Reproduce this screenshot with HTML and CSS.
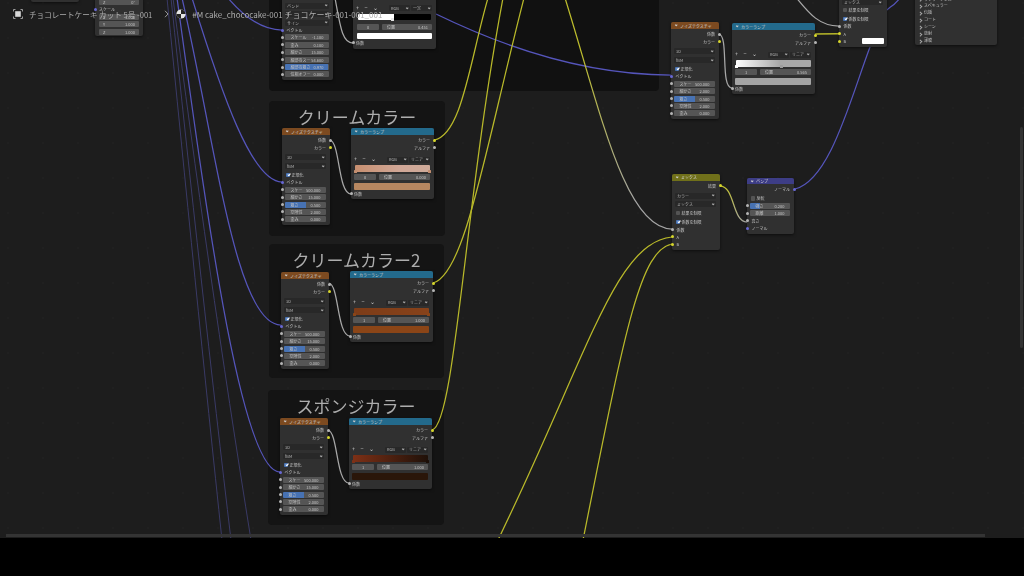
FILE: index.html
```html
<!DOCTYPE html>
<html lang="ja">
<head>
<meta charset="utf-8">
<title>チョコレートケーキ シェーダー</title>
<link rel="stylesheet" href="styles.css">
</head>
<body>
<main class="editor">
  <div class="canvas">
    <section class="frame f-top"></section>
    <section class="frame f-cream"><h2>クリームカラー</h2></section>
    <section class="frame f-cream2"><h2>クリームカラー2</h2></section>
    <section class="frame f-sponge"><h2>スポンジカラー</h2></section>

    <svg class="wires" width="1024" height="538" viewBox="0 0 1024 538">
      <defs>
        <linearGradient id="yg" gradientUnits="userSpaceOnUse" x1="565" y1="60" x2="640" y2="200">
          <stop offset="0" stop-color="#bdbd2c"/><stop offset="1" stop-color="#a5a5a5"/>
        </linearGradient>
        <linearGradient id="yg2" gradientUnits="userSpaceOnUse" x1="720" y1="186" x2="747" y2="222">
          <stop offset="0" stop-color="#c4c42a"/><stop offset="1" stop-color="#a5a5a5"/>
        </linearGradient>
      </defs>
      <path class="w dim" d="M167,-2 C185,180 205,380 222,540"/>
      <path class="w dim" d="M171,-2 C190,180 212,380 231,540"/>
      <path class="w dim" d="M173,-2 C195,170 222,360 251,540"/>
      <path class="w pur" d="M192,-2 C222,95 252,182 282,182"/>
      <path class="w pur" d="M182,-2 C215,140 235,325 281,325"/>
      <path class="w pur" d="M177,-2 C205,200 240,472 280,472"/>
      <path class="w pur" d="M228,-2 C245,18 262,30 282,30"/>
      <path class="w pur" d="M436,14 C510,50 590,75 671,75"/>
      <path class="w pur" d="M795,189 C830,180 850,100 870,47 S885,17 900,-2"/>
      <path class="w yel" d="M434,140 C462,135 470,60 488,-2"/>
      <path class="w yel" d="M433,283 C465,275 485,150 524,-2"/>
      <path class="w yel" d="M432,430 C455,425 465,200 503,-2"/>
      <path class="w yel" d="M672,237 C615,243 590,350 498,540"/>
      <path class="w yel" d="M672,244 C640,250 625,330 583,540"/>
      <path class="w yel thick" d="M814,34 L839,33.7"/>
      <path class="w" stroke="url(#yg)" d="M565,-2 C600,110 625,229 672,229"/>
      <path class="w" stroke="url(#yg2)" d="M720,186 C735,186 732,222 747,222"/>
      <path class="w gry" d="M330,140 C340,142 338,194 351,194"/>
      <path class="w gry" d="M329,283 C339,285 337,336 350,336"/>
      <path class="w gry" d="M328,430 C338,432 336,483 349,483"/>
      <path class="w gry" d="M719,34 C729,36 720,88 732,88"/>
      <path class="w gry" d="M335,-2 C340,25 342,43 353,43"/>
      <path class="w gry" d="M795,-4 C810,15 820,26 839,26"/>
    </svg>

    <!-- 左上のノード -->
    <section class="node n-far"></section>
    <section class="node n-map">
      <div class="row"><div class="field"><span>Z</span><span>0°</span></div></div>
      <div class="row"><i class="sock pur in"></i><span>スケール</span></div>
      <div class="row"><div class="field"><span>X</span><span>1.000</span></div></div>
      <div class="row"><div class="field"><span>Y</span><span>1.000</span></div></div>
      <div class="row"><div class="field"><span>Z</span><span>1.000</span></div></div>
    </section>

    <!-- 上のノイズ -->
    <section class="node n-topnoise">
      <div class="row"><div class="drop"><span>バンド</span></div></div>
      <div class="row sp1"><div class="drop"><span>X</span></div></div>
      <div class="row sp1"><div class="drop"><span>サイン</span></div></div>
      <div class="row"><i class="sock pur in"></i><span>ベクトル</span></div>
      <div class="row"><i class="sock in"></i><div class="field"><span>スケール</span><span>-1.100</span></div></div>
      <div class="row"><i class="sock in"></i><div class="field"><span>歪み</span><span>0.100</span></div></div>
      <div class="row"><i class="sock in"></i><div class="field"><span>細かさ</span><span>15.000</span></div></div>
      <div class="row"><i class="sock in"></i><div class="field"><span>細部のス…</span><span>54.600</span></div></div>
      <div class="row"><i class="sock in"></i><div class="field f97"><span>細部の粗さ</span><span>0.970</span></div></div>
      <div class="row"><i class="sock in"></i><div class="field"><span>位相オフ…</span><span>0.000</span></div></div>
    </section>
    <section class="node n-topramp">
      <div class="tools"><span>+</span><span>−</span><span>⌄</span><div class="drop mode"><span>RGB</span></div><div class="drop mode"><span>一定</span></div></div>
      <div class="bar b-step"><i class="stop mid"></i></div>
      <div class="pos"><div class="field idx"><span>0</span></div><div class="field"><span>位置</span><span>0.451</span></div></div>
      <div class="swatch s-white"></div>
      <div class="row"><i class="sock in"></i><span>係数</span></div>
    </section>

    <!-- クリームカラー -->
    <section class="node noise n-cn">
      <header class="head brown"><span>ノイズテクスチャ</span></header>
      <div class="row out first"><span>係数</span><i class="sock ou"></i></div>
      <div class="row out"><span>カラー</span><i class="sock yel ou"></i></div>
      <div class="row sp2"><div class="drop"><span>3D</span></div></div>
      <div class="row sp3"><div class="drop"><span>fBM</span></div></div>
      <div class="row sp3"><i class="chk on"></i><span>正規化</span></div>
      <div class="row"><i class="sock pur in"></i><span>ベクトル</span></div>
      <div class="row"><i class="sock in"></i><div class="field"><span>スケ…</span><span>500.000</span></div></div>
      <div class="row"><i class="sock in"></i><div class="field"><span>細かさ</span><span>15.000</span></div></div>
      <div class="row"><i class="sock in"></i><div class="field f50"><span>粗さ</span><span>0.500</span></div></div>
      <div class="row"><i class="sock in"></i><div class="field"><span>空隙性</span><span>2.000</span></div></div>
      <div class="row"><i class="sock in"></i><div class="field"><span>歪み</span><span>0.000</span></div></div>
    </section>
    <section class="node ramp n-cr">
      <header class="head blue"><span>カラーランプ</span></header>
      <div class="row out first"><span>カラー</span><i class="sock yel ou"></i></div>
      <div class="row out"><span>アルファ</span><i class="sock ou"></i></div>
      <div class="tools"><span>+</span><span>−</span><span>⌄</span><div class="drop mode"><span>RGB</span></div><div class="drop mode"><span>リニア</span></div></div>
      <div class="bar b-cream"><i class="stop st c1 start"></i><i class="stop st c1 end"></i></div>
      <div class="pos"><div class="field idx"><span>0</span></div><div class="field"><span>位置</span><span>0.000</span></div></div>
      <div class="swatch s-cream"></div>
      <div class="row"><i class="sock in"></i><span>係数</span></div>
    </section>

    <!-- クリームカラー2 -->
    <section class="node noise n-c2n">
      <header class="head brown"><span>ノイズテクスチャ</span></header>
      <div class="row out first"><span>係数</span><i class="sock ou"></i></div>
      <div class="row out"><span>カラー</span><i class="sock yel ou"></i></div>
      <div class="row sp2"><div class="drop"><span>3D</span></div></div>
      <div class="row sp3"><div class="drop"><span>fBM</span></div></div>
      <div class="row sp3"><i class="chk on"></i><span>正規化</span></div>
      <div class="row"><i class="sock pur in"></i><span>ベクトル</span></div>
      <div class="row"><i class="sock in"></i><div class="field"><span>スケ…</span><span>500.000</span></div></div>
      <div class="row"><i class="sock in"></i><div class="field"><span>細かさ</span><span>15.000</span></div></div>
      <div class="row"><i class="sock in"></i><div class="field f50"><span>粗さ</span><span>0.500</span></div></div>
      <div class="row"><i class="sock in"></i><div class="field"><span>空隙性</span><span>2.000</span></div></div>
      <div class="row"><i class="sock in"></i><div class="field"><span>歪み</span><span>0.000</span></div></div>
    </section>
    <section class="node ramp n-c2r">
      <header class="head blue"><span>カラーランプ</span></header>
      <div class="row out first"><span>カラー</span><i class="sock yel ou"></i></div>
      <div class="row out"><span>アルファ</span><i class="sock ou"></i></div>
      <div class="tools"><span>+</span><span>−</span><span>⌄</span><div class="drop mode"><span>RGB</span></div><div class="drop mode"><span>リニア</span></div></div>
      <div class="bar b-cream2"><i class="stop st c2 start"></i><i class="stop st c2 end"></i></div>
      <div class="pos"><div class="field idx"><span>1</span></div><div class="field"><span>位置</span><span>1.000</span></div></div>
      <div class="swatch s-cream2"></div>
      <div class="row"><i class="sock in"></i><span>係数</span></div>
    </section>

    <!-- スポンジカラー -->
    <section class="node noise n-sn">
      <header class="head brown"><span>ノイズテクスチャ</span></header>
      <div class="row out first"><span>係数</span><i class="sock ou"></i></div>
      <div class="row out"><span>カラー</span><i class="sock yel ou"></i></div>
      <div class="row sp2"><div class="drop"><span>3D</span></div></div>
      <div class="row sp3"><div class="drop"><span>fBM</span></div></div>
      <div class="row sp3"><i class="chk on"></i><span>正規化</span></div>
      <div class="row"><i class="sock pur in"></i><span>ベクトル</span></div>
      <div class="row"><i class="sock in"></i><div class="field"><span>スケ…</span><span>500.000</span></div></div>
      <div class="row"><i class="sock in"></i><div class="field"><span>細かさ</span><span>15.000</span></div></div>
      <div class="row"><i class="sock in"></i><div class="field f50"><span>粗さ</span><span>0.500</span></div></div>
      <div class="row"><i class="sock in"></i><div class="field"><span>空隙性</span><span>2.000</span></div></div>
      <div class="row"><i class="sock in"></i><div class="field"><span>歪み</span><span>0.000</span></div></div>
    </section>
    <section class="node ramp n-sr">
      <header class="head blue"><span>カラーランプ</span></header>
      <div class="row out first"><span>カラー</span><i class="sock yel ou"></i></div>
      <div class="row out"><span>アルファ</span><i class="sock ou"></i></div>
      <div class="tools"><span>+</span><span>−</span><span>⌄</span><div class="drop mode"><span>RGB</span></div><div class="drop mode"><span>リニア</span></div></div>
      <div class="bar b-sponge"><i class="stop st c3 start"></i><i class="stop st c4 end"></i></div>
      <div class="pos"><div class="field idx"><span>1</span></div><div class="field"><span>位置</span><span>1.000</span></div></div>
      <div class="swatch s-sponge"></div>
      <div class="row"><i class="sock in"></i><span>係数</span></div>
    </section>

    <!-- 右上 -->
    <section class="node noise n-rn">
      <header class="head brown"><span>ノイズテクスチャ</span></header>
      <div class="row out first"><span>係数</span><i class="sock ou"></i></div>
      <div class="row out"><span>カラー</span><i class="sock yel ou"></i></div>
      <div class="row sp2"><div class="drop"><span>3D</span></div></div>
      <div class="row sp3"><div class="drop"><span>fBM</span></div></div>
      <div class="row sp3"><i class="chk on"></i><span>正規化</span></div>
      <div class="row"><i class="sock pur in"></i><span>ベクトル</span></div>
      <div class="row"><i class="sock in"></i><div class="field"><span>スケ…</span><span>500.000</span></div></div>
      <div class="row"><i class="sock in"></i><div class="field"><span>細かさ</span><span>2.000</span></div></div>
      <div class="row"><i class="sock in"></i><div class="field f50"><span>粗さ</span><span>0.500</span></div></div>
      <div class="row"><i class="sock in"></i><div class="field"><span>空隙性</span><span>2.000</span></div></div>
      <div class="row"><i class="sock in"></i><div class="field"><span>歪み</span><span>0.000</span></div></div>
    </section>
    <section class="node ramp n-rr">
      <header class="head blue"><span>カラーランプ</span></header>
      <div class="row out first"><span>カラー</span><i class="sock yel ou"></i></div>
      <div class="row out"><span>アルファ</span><i class="sock ou"></i></div>
      <div class="tools"><span>+</span><span>−</span><span>⌄</span><div class="drop mode"><span>RGB</span></div><div class="drop mode"><span>リニア</span></div></div>
      <div class="bar b-grey"><i class="stop st white start"></i><i class="stop st grey at58"></i></div>
      <div class="pos"><div class="field idx"><span>1</span></div><div class="field"><span>位置</span><span>0.565</span></div></div>
      <div class="swatch s-grey"></div>
      <div class="row"><i class="sock in"></i><span>係数</span></div>
    </section>
    <section class="node n-topmix">
      <div class="row"><div class="drop"><span>ミックス</span></div></div>
      <div class="row tight"><i class="chk"></i><span>結果を制限</span></div>
      <div class="row sp3"><i class="chk on"></i><span>係数を制限</span></div>
      <div class="row"><i class="sock in"></i><span>係数</span></div>
      <div class="row"><i class="sock yel in"></i><span>A</span></div>
      <div class="row"><i class="sock yel in"></i><span>B</span><b class="minisw"></b></div>
    </section>
    <section class="node n-list">
      <div class="li">サブサーフェス</div>
      <div class="li">スペキュラー</div>
      <div class="li">伝播</div>
      <div class="li">コート</div>
      <div class="li">シーン</div>
      <div class="li">放射</div>
      <div class="li">薄膜</div>
    </section>

    <!-- ミックス / バンプ -->
    <section class="node n-mix">
      <header class="head olive"><span>ミックス</span></header>
      <div class="row out mx0"><span>結果</span><i class="sock yel ou"></i></div>
      <div class="row mx1"><div class="drop"><span>カラー</span></div></div>
      <div class="row mx2"><div class="drop"><span>ミックス</span></div></div>
      <div class="row mx3"><i class="chk"></i><span>結果を制限</span></div>
      <div class="row mx2"><i class="chk on"></i><span>係数を制限</span></div>
      <div class="row mx4"><i class="sock in"></i><span>係数</span></div>
      <div class="row"><i class="sock yel in"></i><span>A</span></div>
      <div class="row"><i class="sock yel in"></i><span>B</span></div>
    </section>
    <section class="node n-bump">
      <header class="head indigo"><span>バンプ</span></header>
      <div class="row out mx0"><span>ノーマル</span><i class="sock pur ou"></i></div>
      <div class="row mx5"><i class="chk"></i><span>反転</span></div>
      <div class="row"><i class="sock in"></i><div class="field f20"><span>強さ</span><span>0.200</span></div></div>
      <div class="row"><i class="sock in"></i><div class="field"><span>距離</span><span>1.000</span></div></div>
      <div class="row"><i class="sock in"></i><span>高さ</span></div>
      <div class="row"><i class="sock pur in"></i><span>ノーマル</span></div>
    </section>
  </div>

  <nav class="crumbs">
    <svg class="ico" width="10" height="10" viewBox="0 0 10 10">
      <path d="M.5 2.5V.5H2.5M7.5 .5H9.5V2.5M9.5 7.5V9.5H7.5M2.5 9.5H.5V7.5" fill="none" stroke="#bbb" stroke-width=".8"/>
      <rect x="2.2" y="2.2" width="5.6" height="5.6" fill="#d8d8d8"/>
    </svg>
    <span class="c-first">チョコレートケーキ カット 5号 -001</span>
    <svg class="sep" width="5" height="8" viewBox="0 0 5 8"><path d="M1 .8 4 4 1 7.2" fill="none" stroke="#9a9a9a" stroke-width="1"/></svg>
    <svg class="ball" width="10" height="10" viewBox="0 0 10 10">
      <circle cx="5" cy="5" r="4.6" fill="#e4e4e4"/>
      <path d="M5 5V.4A4.6 4.6 0 0 1 9.6 5ZM5 5V9.6A4.6 4.6 0 0 1 .4 5Z" fill="#222"/>
    </svg>
    <span class="c-second">#M cake_chococake-001 チョコケーキ-001-001_001</span>
  </nav>
  <div class="sb-h"></div>
  <div class="sb-v"></div>
</main>
</body>
</html>
```
FILE: styles.css
```css
* { box-sizing: border-box; }
html, body { margin: 0; height: 100%; background: #000; overflow: hidden; }
body { font-family: "Noto Sans CJK JP", "Noto Sans", sans-serif; }

.editor { position: relative; width: 1024px; height: 538px; overflow: hidden; background: #1d1d1d; }
.canvas {
  position: absolute; inset: 0; filter: blur(.35px);
  background-image: radial-gradient(circle, #2b2b2b .6px, transparent .9px);
  background-size: 35px 35px; background-position: -9.5px -14.5px;
}

/* frames */
.frame { position: absolute; display: flex; justify-content: center; background: #141414; border-radius: 4px; }
.frame h2 { margin: 0; padding-top: 5px; font-size: 17px; line-height: 22px; font-weight: 400; color: #adadad; }
.f-top { left: 269px; top: -10px; width: 390px; height: 101px; background: #111; }
.f-cream { left: 269px; top: 101px; width: 176px; height: 135px; }
.f-cream2 { left: 269px; top: 244px; width: 175px; height: 134px; }
.f-sponge { left: 268px; top: 390px; width: 176px; height: 135px; }

/* wires */
.wires { position: absolute; left: 0; top: 0; }
.w { fill: none; stroke-width: 1.25; }
.pur { stroke: #5555bb; }
.dim { stroke: #3a3a66; stroke-width: 1; }
.yel { stroke: #b9b92a; }
.gry { stroke: #a8a8a8; }
.thick { stroke-width: 1.5; }

/* nodes */
.node {
  position: absolute; background: #303030; border-radius: 2px;
  box-shadow: 0 1px 3px rgba(0,0,0,.55);
  font-size: 4px; line-height: 6px; color: #c4c4c4;
}
.head { display: flex; align-items: center; height: 7px; padding-left: 9px; border-radius: 2px 2px 0 0; color: #d6d6d6; position: relative; }
.head::before {
  content: ""; position: absolute; left: 4px; top: 2.2px; width: 1.4px; height: 1.4px;
  border-right: .4px solid #ccc; border-bottom: .4px solid #ccc; transform: rotate(45deg);
}
.brown { background: #7c4a20; }
.blue { background: #236a8c; }
.olive { background: #70701a; height: 6.5px; }
.indigo { background: #3d3d86; height: 6px; }

.row { position: relative; display: flex; align-items: center; height: 7.4px; padding: 0 4px 0 3px; gap: 1px; white-space: nowrap; }
.row.out { justify-content: flex-end; }
.first { margin-top: 1.5px; }
.sp1 { margin-top: 1.1px; }
.sp2 { margin-top: 2px; }
.sp3 { margin-top: 1.6px; }
.tight { margin-top: .6px; }
.mx0 { margin-top: 1.5px; }
.mx1 { margin-top: 2.6px; }
.mx2 { margin-top: 1.4px; }
.mx3 { margin-top: 1.1px; }
.mx4 { margin-top: .4px; }
.mx5 { margin-top: 1.9px; }
.noise .sock.in + span, .n-mix .sock.in + span, .n-bump .sock.in + span, .n-topnoise .sock.in + span, .n-topmix .sock.in + span { margin-left: 1.5px; }

.sock { position: absolute; top: 50%; width: 3px; height: 3px; margin-top: -1.5px; border-radius: 50%; background: #b4b4b4; }
.sock.in { left: -1.5px; }
.sock.ou { right: -1.5px; }
.sock.yel { background: #d6d62c; }
.sock.pur { background: #6868d4; }

.field {
  flex: 1; display: flex; justify-content: space-between; align-items: center;
  height: 6px; padding: 0 5.5px; border-radius: 1px; background: #555; color: #c4c4c4; overflow: hidden;
}
.f50 { background: linear-gradient(90deg, #4772b3 50%, #555 50%); }
.f20 { background: linear-gradient(90deg, #4772b3 24%, #555 24%); }
.f97 { background: linear-gradient(90deg, #4772b3 97%, #555 97%); }
.idx { flex: 0 0 22px; justify-content: center; padding: 0; }
.pos .field:last-child { padding: 0 4px 0 5px; }

.drop {
  flex: 1; position: relative; display: flex; align-items: center; height: 6px; padding: 0 2px;
  border-radius: 1px; background: #282828; color: #b0b0b0;
}
.drop::after {
  content: ""; position: absolute; right: 2px; top: 1.8px; width: 1.4px; height: 1.4px;
  border-right: .4px solid #aaa; border-bottom: .4px solid #aaa; transform: rotate(45deg);
}
.chk { flex: none; position: relative; width: 4.4px; height: 4.4px; margin-left: 1px; border-radius: 1px; background: #545454; }
.chk.on { background: #4772b3; }
.chk.on::after {
  content: ""; position: absolute; left: 1.5px; top: .6px; width: 1.3px; height: 2.3px;
  border-right: .5px solid #fff; border-bottom: .5px solid #fff; transform: rotate(40deg);
}
.minisw { margin-left: auto; width: 22px; height: 6px; margin-right: -.5px; background: #fff; border-radius: 1px; }

/* ramp internals */
.tools { display: flex; align-items: center; height: 7px; margin: 4.8px 4px 0 3px; gap: 5.5px; color: #d0d0d0; font-size: 5.5px; }
.tools span { line-height: 7px; }
.mode { flex: 0 0 21px; font-size: 4px; }
.tools .mode { margin-left: -4.5px; }
.tools .mode:first-of-type { margin-left: auto; }
.bar { position: relative; height: 7px; margin: 1.9px 4px 0 4px; border-radius: 1px; }
.pos { display: flex; gap: 3px; height: 6px; margin: 2.5px 4px 0 3px; }
.swatch { height: 7px; margin: 2.5px 4px 0 3px; border-radius: 1px; }
.b-cream { background: linear-gradient(90deg, #c78f70, #d0a797 60%, #ceaa99); }
.s-cream { background: #b78760; }
.b-cream2 { background: linear-gradient(90deg, #7d3c18, #87421a); }
.s-cream2 { background: #8b4517; }
.b-sponge { background: linear-gradient(90deg, #7d3016, #1f1109); }
.s-sponge { background: #2a1609; }
.b-grey { background: linear-gradient(90deg, #fff, #a9a9a9 58%, #a9a9a9); }
.s-grey { background: #a4a4a4; }
.b-step { background: linear-gradient(90deg, #fff 50%, #000 50%); }
.s-white { background: #fff; }
.stop { position: absolute; bottom: -1.5px; width: 3.2px; height: 3.2px; border-radius: .5px; background: #ddd; }
.st.start { left: -1px; }
.st.end { right: -1px; }
.st.at58 { left: 58%; }
.stop.mid { left: 45%; background: #e6e6e6; }
.c1 { background: #c38e70; }
.c2 { background: #8a4518; }
.c3 { background: #7d3016; }
.c4 { background: #1c0f08; }
.white { background: #fff; }
.grey { background: #9d9d9d; }

/* positions on the node canvas */
.n-far { left: 31px; top: -20px; width: 48px; height: 22px; }
.n-map { left: 95px; top: -2px; width: 48px; height: 38px; padding-top: .3px; }
.n-map .row { padding: 0 4px; }
.n-map .field { padding: 0 4px; }
.n-topnoise { left: 282px; top: -2px; width: 51px; height: 82px; padding-top: 4px; }
.n-topramp { left: 353px; top: -6px; width: 83px; height: 54.5px; padding-top: 6.8px; }
.n-topramp .tools { margin-top: 4.2px; margin-bottom: 0; }
.n-topramp .bar { height: 6px; margin: 2px 5px 0 5px; }
.n-topramp .pos { margin: 4px 4px 0 4px; }
.n-topramp .swatch { height: 6px; margin: 3px 4px 0 4px; }
.noise { width: 48px; height: 97px; }
.ramp { width: 83px; height: 71px; }
.n-cn { left: 282px; top: 128px; }
.n-cr { left: 351px; top: 128px; }
.n-c2n { left: 281px; top: 272px; }
.n-c2r { left: 350px; top: 271px; }
.n-sn { left: 280px; top: 418px; }
.n-sr { left: 349px; top: 418px; }
.n-rn { left: 671px; top: 22px; }
.n-rr { left: 732px; top: 23px; }
.n-topmix { left: 839px; top: -5px; width: 48px; height: 52px; padding-top: 3.3px; }
.n-list { left: 915px; top: -5px; width: 82px; height: 50px; padding-top: .5px; }
.li { position: relative; height: 6.9px; line-height: 6.9px; padding-left: 9px; color: #c0c0c0; }
.li::before {
  content: ""; position: absolute; left: 4px; top: 2.7px; width: 1.5px; height: 1.5px;
  border-right: .4px solid #aaa; border-top: .4px solid #aaa; transform: rotate(45deg);
}
.n-mix { left: 672px; top: 174px; width: 48px; height: 76px; }
.n-bump { left: 747px; top: 178px; width: 47px; height: 56px; }

/* breadcrumb overlay */
.crumbs {
  position: absolute; left: 13px; top: 9px; height: 10px; display: flex; align-items: center;
  color: #aeaeae; white-space: nowrap; filter: blur(.25px);
}
.ico { flex: none; }
.c-first { margin-left: 6px; font-size: 7.6px; }
.sep { margin-left: 12px; }
.ball { margin-left: 6.5px; }
.c-second { margin-left: 6.5px; font-size: 8px; }

/* scrollbars */
.sb-h { position: absolute; left: 6px; top: 534px; width: 979px; height: 3px; background: #343434; }
.sb-v { position: absolute; left: 1020px; top: 127px; width: 3px; height: 221px; background: #333; border-radius: 1.5px; }
```
